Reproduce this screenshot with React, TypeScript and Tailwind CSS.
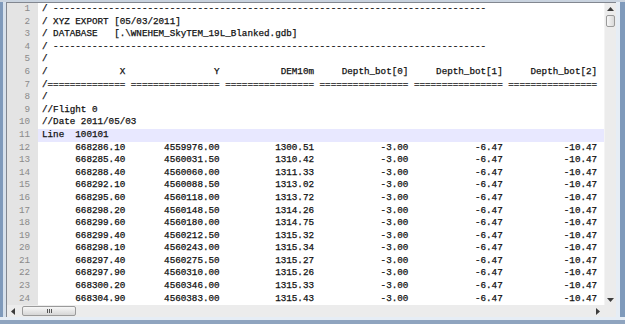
import React from "react";

const pad = (s: string, n: number) => s.padStart(n, " ");

const rows: [string, string, string][] = [
  ["668286.10", "4559976.00", "1300.51"],
  ["668285.40", "4560031.50", "1310.42"],
  ["668288.40", "4560060.00", "1311.33"],
  ["668292.10", "4560088.50", "1313.02"],
  ["668295.60", "4560118.00", "1313.72"],
  ["668298.20", "4560148.50", "1314.26"],
  ["668299.60", "4560180.00", "1314.75"],
  ["668299.40", "4560212.50", "1315.32"],
  ["668298.10", "4560243.00", "1315.34"],
  ["668297.40", "4560275.50", "1315.27"],
  ["668297.90", "4560310.00", "1315.26"],
  ["668300.20", "4560346.00", "1315.33"],
  ["668304.90", "4560383.00", "1315.43"],
];

const dashes = "/ " + "-".repeat(78);

const lines: string[] = [
  dashes,
  "/ XYZ EXPORT [05/03/2011]",
  "/ DATABASE   [.\\WNEHEM_SkyTEM_19L_Blanked.gdb]",
  dashes,
  "/",
  "/" +
    pad("X", 14) +
    pad("Y", 17) +
    pad("DEM10m", 17) +
    pad("Depth_bot[0]", 17) +
    pad("Depth_bot[1]", 17) +
    pad("Depth_bot[2]", 17),
  "/" + "=".repeat(14) + (" " + "=".repeat(16)).repeat(5),
  "/",
  "//Flight 0",
  "//Date 2011/05/03",
  "Line  100101",
  ...rows.map(
    ([x, y, dem]) =>
      pad(x, 15) +
      pad(y, 17) +
      pad(dem, 17) +
      pad("-3.00", 17) +
      pad("-6.47", 17) +
      pad("-10.47", 17)
  ),
];

const Arrow = ({ dir }: { dir: "up" | "down" | "left" | "right" }) => {
  const pts = {
    up: "0,4 3.5,0 7,4",
    down: "0,0 3.5,4 7,0",
    left: "4,0 0,3.5 4,7",
    right: "0,0 4,3.5 0,7",
  }[dir];
  const vertical = dir === "up" || dir === "down";
  return (
    <svg
      width={vertical ? 7 : 4}
      height={vertical ? 4 : 7}
      viewBox={vertical ? "0 0 7 4" : "0 0 4 7"}
    >
      <polygon points={pts} fill="#3c3c3c" />
    </svg>
  );
};

const App = () => {
  return (
    <div
      className="w-[625px] h-[324px] flex flex-col bg-[#dfe7f1] overflow-hidden"
      style={{ fontFamily: '"Liberation Mono", "Courier New", monospace' }}
    >
      <div className="h-[2px] bg-[#c9d3df]" />
      <div className="flex-1 flex min-h-0">
        {/* left frame */}
        <div className="w-[3px] bg-[#7f9abb]" />
        <div className="w-[3px] bg-[#d7e1ec]" />

        {/* editor + scrollbars */}
        <div className="flex-1 flex flex-col border-l border-t border-[#828790] min-w-0">
          <div className="flex-1 flex min-h-0">
            <div className="flex-1 flex flex-col bg-white overflow-hidden text-[9.25px] leading-[12.6px]">
              {lines.map((text, i) => (
                <div key={i} className="flex h-[12.6px] shrink-0">
                  <div className="w-[31px] shrink-0 bg-[#e4e4e4] text-right pr-[8px] text-[#8a8a8a]">
                    {i + 1}
                  </div>
                  <div
                    className={`flex-1 pl-[4px] whitespace-pre text-[#111] [-webkit-text-stroke:0.25px_#111] overflow-hidden ${
                      i === 10 ? "bg-[#e8e8ff]" : ""
                    }`}
                  >
                    {text}
                  </div>
                </div>
              ))}
              <div className="flex flex-1">
                <div className="w-[31px] bg-[#e4e4e4]" />
              </div>
            </div>

            {/* vertical scrollbar */}
            <div className="w-[12px] flex flex-col bg-[#ececec] border-l border-[#f4f4f4]">
              <div className="h-[11px] flex items-center justify-center">
                <Arrow dir="up" />
              </div>
              <div className="h-[12px] mx-[1px] mt-[1px] rounded-[2px] border border-[#9a9a9a] bg-gradient-to-r from-[#f7f7f7] to-[#d9d9d9]" />
              <div className="flex-1" />
              <div className="h-[11px] flex items-center justify-center">
                <Arrow dir="down" />
              </div>
            </div>
          </div>

          {/* horizontal scrollbar */}
          <div className="h-[12px] flex bg-[#ececec]">
            <div className="w-[12px] flex items-center justify-center">
              <Arrow dir="left" />
            </div>
            <div className="w-[54px] ml-[3px] my-[1px] rounded-[2px] border border-[#9a9a9a] bg-gradient-to-b from-[#f7f7f7] to-[#d6d6d6] flex items-center justify-center gap-[1px]">
              <div className="w-[1px] h-[4px] bg-[#555]" />
              <div className="w-[1px] h-[4px] bg-[#555]" />
              <div className="w-[1px] h-[4px] bg-[#555]" />
            </div>
            <div className="flex-1" />
            <div className="w-[12px] flex items-center justify-center">
              <Arrow dir="right" />
            </div>
            <div className="w-[12px] bg-[#ececec]" />
          </div>
        </div>

        {/* right frame */}
        <div className="w-[4px] bg-[#e6edf5]" />
        <div className="w-[5px] bg-[#7f9abb]" />
      </div>
      <div className="h-[3px] bg-[#e6edf5]" />
      <div className="h-[4px] bg-[#8fa4bf]" />
    </div>
  );
};

export default App;
